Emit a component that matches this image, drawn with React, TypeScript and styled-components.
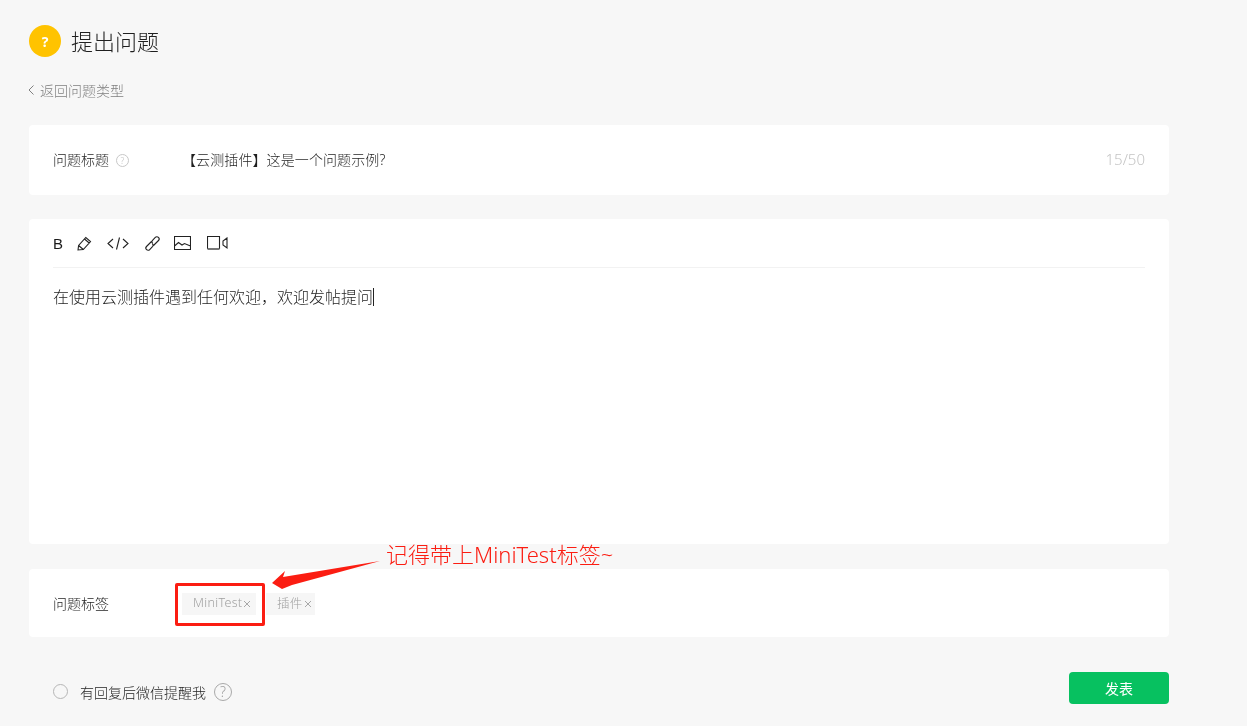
import { ReactElement } from 'react'
import styled, { createGlobalStyle } from 'styled-components'

const GlobalStyle = createGlobalStyle`
  html, body {
    margin: 0;
    padding: 0;
    background: #f7f7f7;
  }
  body {
    font-family: 'Noto Sans', 'Noto Sans CJK SC', sans-serif;
    font-weight: 300;
    color: #1f1f1f;
  }
`

const Page = styled.main`
  position: relative;
  width: 1247px;
  height: 726px;
  overflow: hidden;
  box-sizing: border-box;
  padding: 25px 0 0 29px;
  will-change: transform;
`

const Column = styled.div`
  width: 1140px;
  display: flex;
  flex-direction: column;
`

const Header = styled.header`
  display: flex;
  align-items: center;
  gap: 10px;
  height: 32px;
`

const QuestionBadge = styled.span`
  width: 32px;
  height: 32px;
  border-radius: 50%;
  background: #ffc300;
  color: #fff;
  font-size: 14px;
  font-weight: 700;
  display: flex;
  align-items: center;
  justify-content: center;
`

const Title = styled.h1`
  margin: 0;
  font-size: 22px;
  font-weight: 300;
  line-height: 32px;
  color: #1f1f1f;
`

const BackLink = styled.a`
  display: flex;
  align-items: center;
  gap: 6px;
  margin: 23px 0 1px -1px;
  height: 20px;
  font-size: 14px;
  color: #808080;
`

const Card = styled.section<{ $height: number; $top: number }>`
  height: ${(p) => p.$height}px;
  margin-top: ${(p) => p.$top}px;
  background: #fff;
  border-radius: 4px;
  box-sizing: border-box;
  padding: 0 24px;
`

const FieldRow = styled.div`
  height: 100%;
  display: flex;
  align-items: center;
  font-size: 14px;
`

const TitleRow = styled(FieldRow)`
  padding-bottom: 2px;
  box-sizing: border-box;
`

const FieldLabel = styled.div`
  width: 129px;
  flex-shrink: 0;
  display: flex;
  align-items: center;
  gap: 7px;
`

const FieldValue = styled.div`
  flex: 1;
  letter-spacing: 0.1px;
`

const Counter = styled.span`
  color: #c4c4c4;
  font-size: 15px;
`

const Toolbar = styled.div`
  height: 48px;
  display: flex;
  align-items: center;
  border-bottom: 1px solid #f2f2f2;
  box-sizing: content-box;
`

const BoldButton = styled.span`
  width: 24px;
  font-family: 'Liberation Sans', sans-serif;
  font-size: 15px;
  font-weight: 400;
  color: #1a1a1a;
`

const ToolIcon = styled.svg<{ $gap: number }>`
  margin-right: ${(p) => p.$gap}px;
  fill: none;
  stroke: #222;
  stroke-width: 1.1;
  display: block;
`

const EditorText = styled.div`
  margin-top: 17px;
  font-size: 16px;
  line-height: 24px;
  display: flex;
  align-items: center;
`

const Caret = styled.span`
  display: inline-block;
  width: 1px;
  height: 18px;
  background: #222;
`

const TagList = styled.div`
  display: flex;
  gap: 10px;
  margin-top: 1px;
`

const Tag = styled.span<{ $width: number }>`
  width: ${(p) => p.$width}px;
  height: 22px;
  box-sizing: border-box;
  padding-left: 10px;
  display: flex;
  align-items: center;
  gap: 1px;
  background: #f6f6f6;
  color: #a0a0a0;
  font-size: 12.5px;
  letter-spacing: 0.3px;
`

const TagLabel = styled.span`
  margin: 0 0 2px 1px;
`

const Footer = styled.footer`
  margin-top: 35px;
  height: 32px;
  display: flex;
  align-items: center;
  padding-left: 24px;
  font-size: 14px;
`

const ReminderOption = styled.label`
  display: flex;
  align-items: center;
  margin-top: 7px;
`

const Radio = styled.span`
  width: 13px;
  height: 13px;
  border: 1px solid #b5b5b5;
  border-radius: 50%;
  margin-right: 12px;
`

const HelpRing = styled.span`
  width: 16px;
  height: 16px;
  margin-left: 8px;
  border: 1px solid #a8a8a8;
  border-radius: 50%;
  color: #a0a0a0;
  font-size: 14px;
  display: flex;
  align-items: center;
  justify-content: center;
`

const SmallHelp = styled(HelpRing)`
  width: 11px;
  height: 11px;
  margin: 2px 0 0;
  border-color: #c8c8c8;
  color: #c0c0c0;
  font-size: 9px;
`

const PublishButton = styled.button`
  margin-left: auto;
  width: 100px;
  height: 32px;
  border: 0;
  border-radius: 4px;
  background: #07c160;
  color: #fff;
  font-family: inherit;
  font-size: 14px;
  font-weight: 400;
`

/* 截图上的红色标注 */
const Highlight = styled.div`
  position: absolute;
  left: 175px;
  top: 583px;
  width: 90px;
  height: 43px;
  box-sizing: border-box;
  border: 3px solid #fb1d12;
  border-radius: 2px;
`

const CalloutText = styled.div`
  position: absolute;
  left: 386px;
  top: 539px;
  font-size: 22px;
  line-height: 30px;
  font-weight: 300;
  color: #fb1d12;
  white-space: nowrap;
`

const CalloutArrow = styled.svg`
  position: absolute;
  left: 260px;
  top: 550px;
`

const CloseIcon = (): ReactElement => (
  <svg width="8" height="8" viewBox="0 0 8 8" fill="none" stroke="#a8a8a8" strokeWidth="1">
    <path d="M1 1l6 6M7 1L1 7" />
  </svg>
)

export default function App(): ReactElement {
  return (
    <Page>
      <GlobalStyle />
      <Column>
        <Header>
          <QuestionBadge>?</QuestionBadge>
          <Title>提出问题</Title>
        </Header>
        <BackLink>
          <svg width="6" height="10" viewBox="0 0 6 10" fill="none" stroke="#808080" strokeWidth="1">
            <path d="M5.500 .5L1 5l4.500 4.500" />
          </svg>
          返回问题类型
        </BackLink>

        <Card $height={70} $top={24}>
          <TitleRow>
            <FieldLabel>
              问题标题
              <SmallHelp>?</SmallHelp>
            </FieldLabel>
            <FieldValue>【云测插件】这是一个问题示例?</FieldValue>
            <Counter>15/50</Counter>
          </TitleRow>
        </Card>

        <Card $height={325} $top={24}>
          <Toolbar>
            <BoldButton>B</BoldButton>
            <ToolIcon $gap={15} width="15" height="15" viewBox="0 0 15 15">
              <path d="M1 14l.6-4.500L8.800 1.500l4.700 4-7.200 8zM1.600 9.500l4.700 4M7.500 3l4.700 4" />
            </ToolIcon>
            <ToolIcon $gap={15} width="22" height="15" viewBox="0 0 22 15">
              <path d="M6 3L1 7.500 6 12M16 3l5 4.500L16 12M12.500 1.500l-3 12" />
            </ToolIcon>
            <ToolIcon $gap={13} width="17" height="15" viewBox="0 0 17 15">
              <path d="M7.500 5.500L2.500 10.500a2.200 2.200 0 0 0 3.200 3.100l3-3.200a1.800 1.800 0 0 0-.5-2.700M9.500 9.500l5-5a2.200 2.200 0 0 0-3.200-3.100l-3 3.200a1.800 1.800 0 0 0 .5 2.700" />
            </ToolIcon>
            <ToolIcon $gap={16} width="17" height="14" viewBox="0 0 17 14">
              <path d="M.5.500h16v13H.5zM.5 10l4-3.500 3.500 2.500 2.500-1.500 6 2.500" />
            </ToolIcon>
            <ToolIcon $gap={0} width="21" height="14" viewBox="0 0 21 14">
              <path d="M.5 13V.5h12V13M20 2l-4 3v4l4 3z" />
              <path d="M.5 13h12" stroke="#777" strokeWidth="2" />
            </ToolIcon>
          </Toolbar>
          <EditorText>
            在使用云测插件遇到任何欢迎，欢迎发帖提问
            <Caret />
          </EditorText>
        </Card>

        <Card $height={68} $top={25}>
          <FieldRow>
            <FieldLabel>问题标签</FieldLabel>
            <TagList>
              <Tag $width={74}>
                <TagLabel>MiniTest</TagLabel>
                <CloseIcon />
              </Tag>
              <Tag $width={49}>
                <TagLabel>插件</TagLabel>
                <CloseIcon />
              </Tag>
            </TagList>
          </FieldRow>
        </Card>

        <Footer>
          <ReminderOption>
            <Radio />
            有回复后微信提醒我
            <HelpRing>?</HelpRing>
          </ReminderOption>
          <PublishButton>发表</PublishButton>
        </Footer>
      </Column>

      <Highlight />
      <CalloutArrow width="130" height="45" viewBox="0 0 130 45">
        <polygon points="12,33 25,21 23,27 120,11 32,35 22,39" fill="#fb1d12" />
      </CalloutArrow>
      <CalloutText>记得带上MiniTest标签~</CalloutText>
    </Page>
  )
}
